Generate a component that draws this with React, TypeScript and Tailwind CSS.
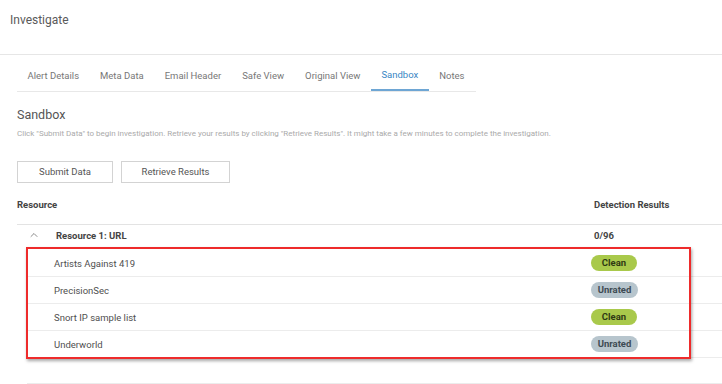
import { ChevronUp } from "lucide-react";

const TABS = ["Alert Details", "Meta Data", "Email Header", "Safe View", "Original View", "Sandbox", "Notes"];

const RESULTS = [
  { name: "Artists Against 419", status: "Clean" },
  { name: "PrecisionSec", status: "Unrated" },
  { name: "Snort IP sample list", status: "Clean" },
  { name: "Underworld", status: "Unrated" },
];

function Badge({ status }: { status: string }) {
  const clean = status === "Clean";
  return (
    <span
      className={
        clean
          ? "inline-flex h-[16px] w-[46px] items-center justify-center rounded-full bg-[#a9c94b] text-[9.5px] font-bold text-[#2f3a14]"
          : "inline-flex h-[16px] w-[47px] items-center justify-center rounded-full bg-[#b7c5cd] text-[9.5px] font-bold text-[#3e4b53]"
      }
    >
      {status}
    </span>
  );
}

export default function App() {
  return (
    <div className="relative h-[384px] w-[722px] overflow-hidden bg-white font-['Roboto',sans-serif] text-[#555]">
      {/* Page title */}
      <div className="flex h-[55px] items-start border-b border-[#e6e6e6] pl-[10px] pt-[12px]">
        <h1 className="text-[12px] font-normal leading-[16px] text-[#5a5a5a]">Investigate</h1>
      </div>

      {/* Tabs */}
      <div className="ml-[17px] flex w-[459px] border-b border-[#e8e8e8]">
        {TABS.map((tab) => {
          const active = tab === "Sandbox";
          return (
            <div
              key={tab}
              className={
                active
                  ? "-mb-px flex h-[36px] shrink-0 items-center whitespace-nowrap border-b-2 border-[#6ea6d4] px-[10.5px] pt-[7px] text-[9.5px] text-[#3a86c4]"
                  : "flex h-[36px] shrink-0 items-center whitespace-nowrap px-[10.5px] pt-[6px] text-[9.5px] text-[#777]"
              }
            >
              {tab}
            </div>
          );
        })}
      </div>

      {/* Sandbox section */}
      <div className="pl-[17px]">
        <h2 className="mt-[14px] text-[12.5px] font-normal leading-[18px] text-[#555]">Sandbox</h2>
        <p className="mt-[4px] whitespace-nowrap text-[8px] leading-[12px] text-[#aaa]">
          Click "Submit Data" to begin investigation. Retrieve your results by clicking "Retrieve Results". It might take a few minutes to complete the investigation.
        </p>
        <div className="mt-[21px] flex gap-[8px]">
          <button className="h-[22px] w-[96px] border border-[#d3d3d3] bg-white text-[9.5px] text-[#555]">Submit Data</button>
          <button className="h-[22px] w-[109px] border border-[#d3d3d3] bg-white text-[9.5px] text-[#555]">Retrieve Results</button>
        </div>

        {/* Table */}
        <div className="w-[705px]">
          <div className="flex border-b border-[#e3e3e3] pb-[13px] pt-[16px] text-[9.5px] font-bold leading-[12px] text-[#444]">
            <div className="w-[577px]">Resource</div>
            <div>Detection Results</div>
          </div>
          <div className="flex h-[25px] items-center pb-[2px] text-[9.5px] font-bold text-[#444]">
            <div className="flex w-[577px] items-center">
              <ChevronUp className="ml-[11px] mr-[16px] h-[12px] w-[12px] -translate-y-[2px] text-[#666]" strokeWidth={1.5} />
              <span>Resource 1: URL</span>
            </div>
            <div>0/96</div>
          </div>
          <div className="ml-[10px]">
            {RESULTS.map((r) => (
              <div key={r.name} className="flex h-[27px] items-center border-b border-[#ececec] text-[9.5px] text-[#4f4f4f]">
                <div className="w-[564px] translate-y-[1px] pl-[27px]">{r.name}</div>
                <Badge status={r.status} />
              </div>
            ))}
            <div className="h-[26px] border-b border-[#ececec]" />
          </div>
        </div>
      </div>

      {/* Highlight annotation */}
      <div className="pointer-events-none absolute left-[26px] top-[247px] h-[112px] w-[665px] border-2 border-[#ee2b2b] shadow-[1px_2px_3px_rgba(0,0,0,0.35)]" />
    </div>
  );
}
